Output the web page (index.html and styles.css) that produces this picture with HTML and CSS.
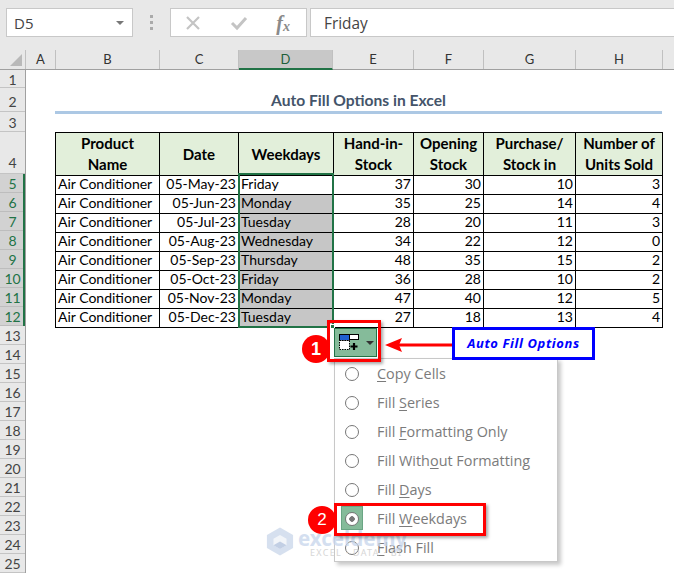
FILE: index.html
```html
<!DOCTYPE html>
<html>
<head>
  <title>Auto Fill Options in Excel</title>
  <link rel="stylesheet" href="styles.css">
</head>
<body>
<div class="page">
  <div class="formula-bar">
    <div class="name-box"><span>D5</span><i class="caret"></i></div>
    <div class="grip"><i></i><i></i><i></i></div>
    <div class="fx-box">
      <svg width="16" height="16" viewBox="0 0 16 16"><path d="M2 2 L14 14 M14 2 L2 14" stroke="#c4c4c4" stroke-width="2.2" fill="none"/></svg>
      <svg width="18" height="16" viewBox="0 0 18 16"><path d="M2 8 L7 13 L16 3" stroke="#c4c4c4" stroke-width="3" fill="none"/></svg>
      <span class="fx">f<sub>x</sub></span>
    </div>
    <div class="formula-input">Friday</div>
  </div>

  <div class="col-heads">
    <div class="corner"><i></i></div>
    <div class="col-a">A</div>
    <div class="col-b">B</div>
    <div class="col-c">C</div>
    <div class="col-d active">D</div>
    <div class="col-e">E</div>
    <div class="col-f">F</div>
    <div class="col-g">G</div>
    <div class="col-h">H</div>
    <div class="col-rest"></div>
  </div>

  <div class="sheet">
    <div class="row-heads">
      <div class="r18">1</div>
      <div class="r24">2</div>
      <div class="r20">3</div>
      <div class="r42">4</div>
      <div class="sel">5</div>
      <div class="sel">6</div>
      <div class="sel">7</div>
      <div class="sel">8</div>
      <div class="sel">9</div>
      <div class="sel">10</div>
      <div class="sel">11</div>
      <div class="sel">12</div>
      <div>13</div>
      <div>14</div>
      <div>15</div>
      <div>16</div>
      <div>17</div>
      <div>18</div>
      <div>19</div>
      <div>20</div>
      <div>21</div>
      <div>22</div>
      <div>23</div>
      <div>24</div>
      <div>25</div>
    </div>

    <div class="cells">
      <div class="title">Auto Fill Options in Excel</div>
      <table class="data">
        <colgroup>
          <col class="w-b"><col class="w-c"><col class="w-d"><col class="w-e"><col class="w-f"><col class="w-g"><col class="w-h">
        </colgroup>
        <tr class="head">
          <th>Product<br>Name</th><th>Date</th><th>Weekdays</th><th>Hand-in-<br>Stock</th><th>Opening<br>Stock</th><th>Purchase/<br>Stock in</th><th>Number of<br>Units Sold</th>
        </tr>
        <tr><td>Air Conditioner</td><td class="num">05-May-23</td><td class="day">Friday</td><td class="num">37</td><td class="num">30</td><td class="num">10</td><td class="num">3</td></tr>
        <tr><td>Air Conditioner</td><td class="num">05-Jun-23</td><td class="day grey">Monday</td><td class="num">35</td><td class="num">25</td><td class="num">14</td><td class="num">4</td></tr>
        <tr><td>Air Conditioner</td><td class="num">05-Jul-23</td><td class="day grey">Tuesday</td><td class="num">28</td><td class="num">20</td><td class="num">11</td><td class="num">3</td></tr>
        <tr><td>Air Conditioner</td><td class="num">05-Aug-23</td><td class="day grey">Wednesday</td><td class="num">34</td><td class="num">22</td><td class="num">12</td><td class="num">0</td></tr>
        <tr><td>Air Conditioner</td><td class="num">05-Sep-23</td><td class="day grey">Thursday</td><td class="num">48</td><td class="num">35</td><td class="num">15</td><td class="num">2</td></tr>
        <tr><td>Air Conditioner</td><td class="num">05-Oct-23</td><td class="day grey">Friday</td><td class="num">36</td><td class="num">28</td><td class="num">10</td><td class="num">2</td></tr>
        <tr><td>Air Conditioner</td><td class="num">05-Nov-23</td><td class="day grey">Monday</td><td class="num">47</td><td class="num">40</td><td class="num">12</td><td class="num">5</td></tr>
        <tr><td>Air Conditioner</td><td class="num">05-Dec-23</td><td class="day grey">Tuesday</td><td class="num">27</td><td class="num">18</td><td class="num">13</td><td class="num">4</td></tr>
      </table>
    </div>
  </div>

  <!-- things that sit over the sheet -->
  <div class="selection"></div>
  <div class="handle"></div>

  <div class="fill-menu">
    <div class="item"><i class="radio"></i><span><u>C</u>opy Cells</span></div>
    <div class="item"><i class="radio"></i><span>Fill <u>S</u>eries</span></div>
    <div class="item"><i class="radio"></i><span>Fill <u>F</u>ormatting Only</span></div>
    <div class="item"><i class="radio"></i><span>Fill With<u>o</u>ut Formatting</span></div>
    <div class="item"><i class="radio"></i><span>Fill <u>D</u>ays</span></div>
    <div class="item checked"><i class="radio"></i><span>Fill <u>W</u>eekdays</span></div>
    <div class="item"><i class="radio"></i><span><u>F</u>lash Fill</span></div>
  </div>

  <div class="watermark">
    <svg width="28" height="31" viewBox="0 0 30 32"><path d="M15 1 L29 9 L29 23 L15 31 L1 23 L1 9 Z" fill="#c9d6ea"/><path d="M15 9 L22 13 L22 20 L15 24 L8 20 L8 13 Z" fill="#eef2f8"/><path d="M15 16 L22 20 L15 24 L8 20 Z" fill="#aebfdc"/></svg>
    <div class="wm-text">
      <div class="wm-name">exceldemy</div>
      <div class="wm-sub">EXCEL · DATA · BI</div>
    </div>
  </div>

  <div class="fill-btn">
    <svg width="20" height="18" viewBox="0 0 20 18">
      <rect x="0.5" y="0.5" width="10" height="6" fill="#1f5fd0" stroke="#000"/>
      <rect x="10.5" y="0.5" width="9" height="5" fill="#fff" stroke="#000"/>
      <rect x="0.5" y="6.5" width="10" height="9" fill="#fff" stroke="#000" stroke-dasharray="1.5 1"/>
      <path d="M15 9 V16 M11.5 12.5 H18.5" stroke="#000" stroke-width="2.2"/>
    </svg>
    <i class="btn-caret"></i>
  </div>
  <div class="red-box box-one"></div>
  <div class="badge badge-one">1</div>

  <svg class="pointer" width="70" height="18" viewBox="0 0 70 18">
    <path d="M70 9 H14" stroke="#f00" stroke-width="3"/>
    <path d="M0 9 L17 2 L14 9 L17 16 Z" fill="#f00"/>
  </svg>
  <div class="note">Auto Fill Options</div>

  <div class="red-box box-two"></div>
  <div class="badge badge-two">2</div>
</div>
</body>
</html>
```

FILE: styles.css
```css
html, body {
  margin: 0;
  padding: 0;
  background: #fff;
}
.page {
  position: relative;
  width: 674px;
  height: 573px;
  overflow: hidden;
  font-family: Lato, "Noto Sans", sans-serif;
  font-size: 14px;
  color: #000;
}

/* formula bar */
.formula-bar {
  display: flex;
  align-items: flex-start;
  height: 50px;
  padding: 8px 0 0 6px;
  box-sizing: border-box;
  background: #e8e8e8;
}
.name-box, .fx-box, .formula-input {
  height: 29px;
  box-sizing: border-box;
  background: #fff;
  border: 1px solid #c8c8c8;
  display: flex;
  align-items: center;
}
.name-box {
  width: 127px;
  padding: 1px 8px 0 7px;
  justify-content: space-between;
  font-family: "Open Sans", sans-serif;
  font-size: 15px;
  color: #444;
}
.caret {
  border-left: 4px solid transparent;
  border-right: 4px solid transparent;
  border-top: 4px solid #777;
}
.grip {
  width: 37px;
  height: 29px;
  display: flex;
  flex-direction: column;
  align-items: center;
  justify-content: center;
  gap: 3px;
}
.grip i {
  width: 3px;
  height: 3px;
  background: #aaa;
}
.fx-box {
  width: 137px;
  padding: 0 16px 0 14px;
  justify-content: space-between;
}
.fx {
  font-family: "Liberation Serif", serif;
  font-style: italic;
  font-weight: bold;
  font-size: 20px;
  color: #8a8a8a;
  line-height: 1;
}
.fx sub {
  font-size: 14px;
  vertical-align: -1px;
  line-height: 0;
}
.formula-input {
  flex: 1;
  margin-left: 3px;
  padding: 1px 0 0 13px;
  border-right: none;
  font-family: "Open Sans", sans-serif;
  font-size: 15.4px;
  color: #444;
}

/* column letters */
.col-heads {
  display: flex;
  height: 20px;
  background: #e8e8e8;
  border-bottom: 1px solid #a0a0a0;
  box-sizing: border-box;
  font-size: 13px;
  color: #333;
}
.col-heads > div {
  box-sizing: border-box;
  border-right: 1px solid #c0c0c0;
  text-align: center;
  line-height: 19px;
}
.corner {
  position: relative;
  width: 26px;
}
.corner i {
  position: absolute;
  right: 3px;
  bottom: 3px;
  border-left: 12px solid transparent;
  border-bottom: 12px solid #b9b9b9;
}
.col-a { width: 30px; }
.col-b { width: 104px; }
.col-c { width: 79px; }
.col-d { width: 94px; }
.col-e { width: 81px; }
.col-f { width: 70px; }
.col-g { width: 92px; }
.col-h { width: 87px; }
.col-heads .col-rest { flex: 1; border-right: none; }
.col-heads .active {
  background: #c8c8c8;
  border-bottom: 2px solid #217346;
  height: 20px;
  color: #1d5f3a;
}

/* sheet body */
.sheet {
  display: flex;
}
.row-heads {
  width: 26px;
  flex: none;
  box-sizing: border-box;
  background: #e8e8e8;
  border-right: 1px solid #a0a0a0;
  font-size: 14px;
  color: #444;
}
.row-heads div {
  height: 19px;
  box-sizing: border-box;
  border-bottom: 1px solid #c4c4c4;
  text-align: center;
  line-height: 20px;
}
.row-heads .r18 { height: 18px; line-height: 19px; }
.row-heads .r24 { height: 24px; line-height: 27px; }
.row-heads .r20 { height: 20px; line-height: 21px; }
.row-heads .r42 { height: 42px; line-height: 62px; }
.row-heads .sel {
  background: #d2d2d2;
  color: #217346;
  border-bottom: none;
  box-shadow: inset -2px 0 0 #217346, inset 0 -1px 0 #bdbdbd;
}
.cells {
  flex: 1;
  padding-left: 29px;
}
.title {
  width: 607px;
  height: 44px;
  box-sizing: border-box;
  padding-top: 21px;
  border-bottom: 3px solid #acc8e4;
  text-align: center;
  font-weight: bold;
  font-size: 15.6px;
  line-height: 19px;
  color: #44546a;
}
.data {
  margin-top: 18px;
  border-collapse: collapse;
  table-layout: fixed;
  width: 607px;
}
.w-b { width: 104px; }
.w-c { width: 79px; }
.w-d { width: 95px; }
.w-e { width: 80px; }
.w-f { width: 70px; }
.w-g { width: 92px; }
.w-h { width: 87px; }
.data th, .data td {
  border: 1px solid #000;
  white-space: nowrap;
  overflow: hidden;
}
.data th {
  height: 41px;
  background: #e2efda;
  font-weight: bold;
  font-size: 15px;
  line-height: 21px;
  padding: 0;
}
.data td {
  height: 16px;
  line-height: 16px;
  padding: 0 2px 2px;
  font-size: 14px;
}
.data .num { text-align: right; }
.data .grey { background: #c6c6c6; }

/* selected range */
.selection {
  position: absolute;
  left: 238px;
  top: 173px;
  width: 92px;
  height: 151px;
  border: 2px solid #217346;
}
.handle {
  position: absolute;
  left: 330px;
  top: 324px;
  width: 5px;
  height: 5px;
  background: #217346;
  border: 1px solid #fff;
  box-sizing: border-box;
}

/* auto fill menu */
.fill-menu {
  position: absolute;
  left: 334px;
  top: 358px;
  width: 224px;
  height: 204px;
  box-sizing: border-box;
  background: #fff;
  border: 1px solid #c8c8c8;
  box-shadow: 3px 3px 4px rgba(0, 0, 0, 0.22);
  font-family: "Open Sans", sans-serif;
  font-size: 14.4px;
  color: #7b7b7b;
}
.item {
  display: flex;
  align-items: center;
  height: 29px;
  padding-left: 10px;
}
.item u { text-underline-offset: 2px; }
.radio {
  width: 14px;
  height: 14px;
  box-sizing: border-box;
  margin-right: 18px;
  border: 1.5px solid #777;
  border-radius: 50%;
  background: #fff;
  display: block;
}
.checked { position: relative; }
.checked::before {
  content: "";
  position: absolute;
  left: 6px;
  top: 2px;
  width: 22px;
  height: 24px;
  background: #85bb9a;
  border: 1px solid #6aa584;
  box-sizing: border-box;
}
.checked .radio {
  position: relative;
  background: radial-gradient(circle, #777 2.5px, #fff 3px);
}

/* watermark */
.watermark {
  position: absolute;
  left: 266px;
  top: 526px;
  display: flex;
  gap: 4px;
  opacity: 0.75;
}
.wm-text {
  padding-top: 3px;
}
.wm-name {
  font-family: "Noto Sans", sans-serif;
  font-weight: bold;
  font-size: 20.5px;
  line-height: 19px;
  color: #c6d5ec;
}
.wm-sub {
  margin-left: 12px;
  font-family: "Noto Sans", sans-serif;
  font-size: 9px;
  line-height: 10px;
  letter-spacing: 1.3px;
  color: #c9c9c9;
}

/* callouts */
.fill-btn {
  position: absolute;
  left: 334px;
  top: 328px;
  width: 43px;
  height: 29px;
  box-sizing: border-box;
  background: #85bb9a;
  border: 1px solid #217346;
  display: flex;
  align-items: center;
  padding-left: 4px;
  gap: 7px;
}
.btn-caret {
  border-left: 4px solid transparent;
  border-right: 4px solid transparent;
  border-top: 4px solid #333;
}
.red-box {
  position: absolute;
  box-sizing: border-box;
  border: 3px solid #f00;
  box-shadow: 2px 2px 3px rgba(0, 0, 0, 0.35);
}
.box-one {
  left: 327px;
  top: 320px;
  width: 54px;
  height: 42px;
}
.box-two {
  left: 334px;
  top: 503px;
  width: 152px;
  height: 33px;
}
.badge {
  position: absolute;
  width: 28px;
  height: 28px;
  border-radius: 50%;
  background: #f00;
  color: #fff;
  text-align: center;
  line-height: 28px;
  font-family: "Liberation Sans", sans-serif;
  font-size: 17px;
}
.badge-one {
  left: 302px;
  top: 335px;
  font-weight: bold;
  font-size: 18px;
}
.badge-two {
  left: 308px;
  top: 506px;
}
.pointer {
  position: absolute;
  left: 385px;
  top: 336px;
}
.note {
  position: absolute;
  left: 452px;
  top: 327px;
  width: 143px;
  height: 33px;
  box-sizing: border-box;
  border: 3px solid #00f;
  background: #fff;
  color: #00f;
  text-align: center;
  line-height: 26px;
  font-family: "Noto Sans", sans-serif;
  font-weight: bold;
  font-style: italic;
  font-size: 13px;
  letter-spacing: 0.6px;
}
```
